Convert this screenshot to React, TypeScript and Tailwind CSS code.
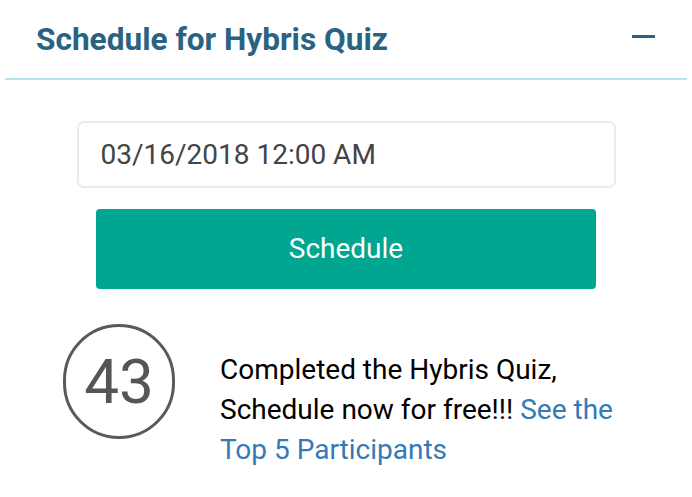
export default function App() {
  return (
    <div className="w-[692px] h-[497px] bg-white" style={{ fontFamily: "Roboto, 'Liberation Sans', sans-serif" }}>
      <div className="mx-[5px] h-[80px] border-b-2 border-[#b3e4ec] flex items-center justify-between pl-[31px] pr-[32px]">
        <h2 className="text-[31.6px] font-bold text-[#2a6281] leading-none pt-[2px]">Schedule for Hybris Quiz</h2>
        <div className="w-[23px] h-[3px] bg-[#2a6281] mb-[6px]" />
      </div>
      <div className="flex flex-col items-center pt-[41px]">
        <div className="w-[539px] h-[67px] border-2 border-[#ebebeb] rounded-[7px] flex items-center px-[22px] text-[28px] text-[#444444]">
          03/16/2018 12:00 AM
        </div>
        <button className="mt-[21px] w-[500px] h-[80px] bg-[#00a68f] rounded-[4px] text-white text-[28px] flex items-center justify-center">
          Schedule
        </button>
      </div>
      <div className="flex items-start pl-[63px] pt-[35px]">
        <div className="w-[112px] h-[115px] rounded-full border-[3px] border-[#5a5a5a] flex items-center justify-center text-[62px] text-[#555555] font-normal shrink-0">
          43
        </div>
        <p className="ml-[45px] mt-[26px] text-[28px] leading-[40px] text-black w-[420px]">
          Completed the Hybris Quiz, Schedule now for free!!! <span className="text-[#337ab7]">See the Top 5 Participants</span>
        </p>
      </div>
    </div>
  );
}
